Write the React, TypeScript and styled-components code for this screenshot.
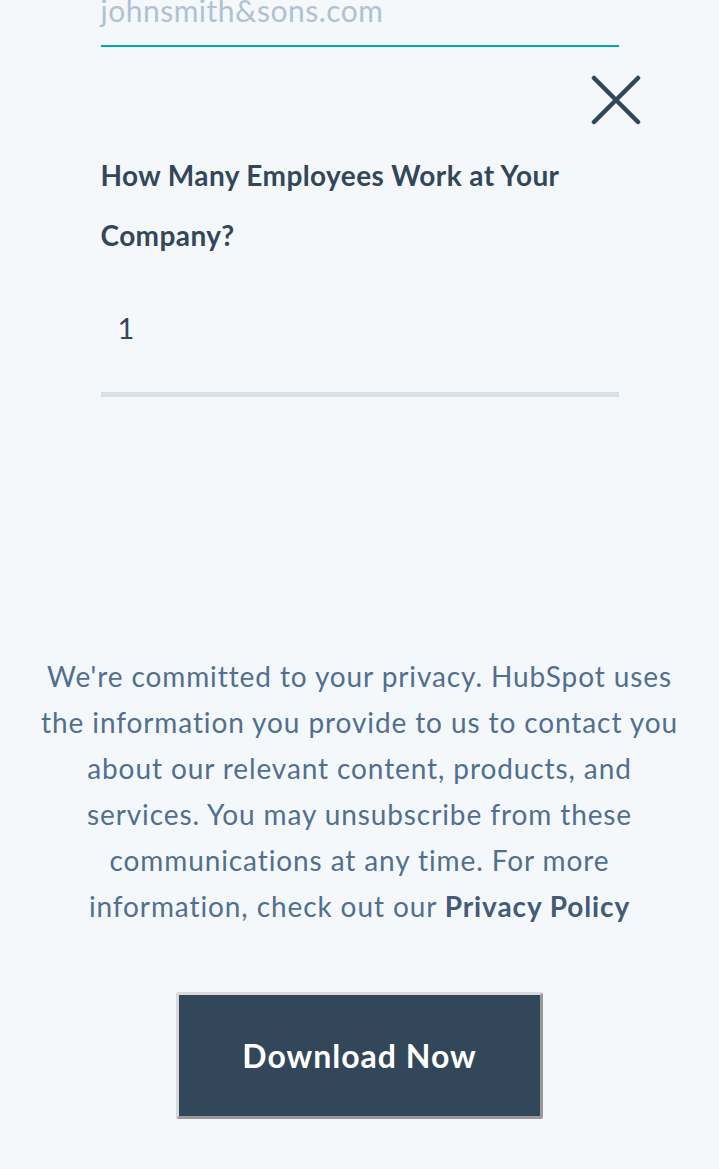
import React from "react";
import styled, { createGlobalStyle } from "styled-components";

const Global = createGlobalStyle`
  html, body {
    margin: 0;
    padding: 0;
    background: #f5f8fa;
  }
  body {
    font-family: Lato, "Noto Sans", "Liberation Sans", sans-serif;
    overflow: hidden;
  }
`;

const Page = styled.div`
  width: 719px;
  min-height: 1169px;
  background: #f5f8fa;
  display: flex;
  flex-direction: column;
  align-items: center;
`;

const Column = styled.div`
  width: 518px;
  display: flex;
  flex-direction: column;
`;

const EmailField = styled.div`
  box-sizing: border-box;
  height: 47px;
  display: flex;
  align-items: flex-end;
  padding-bottom: 20px;
  border-bottom: 2px solid #00a4bd;
`;

const Placeholder = styled.span`
  font-size: 30px;
  line-height: 1;
  color: #b0c1d4;
  letter-spacing: 0.5px;
`;

const CloseRow = styled.div`
  display: flex;
  justify-content: flex-end;
  margin-top: 28px;
  margin-right: -22px;
`;

const CloseButton = styled.button`
  width: 50px;
  height: 50px;
  padding: 0;
  border: 0;
  background: transparent;
  display: flex;
  cursor: pointer;
`;

const Label = styled.label`
  margin-top: 20px;
  font-size: 28px;
  line-height: 60px;
  font-weight: 700;
  letter-spacing: 0.4px;
  color: #33475b;
`;

const NumberField = styled.div`
  box-sizing: border-box;
  height: 132px;
  padding: 48px 0 0 17px;
  border-bottom: 5px solid #d6e0e9;
  font-size: 29px;
  line-height: 30px;
  color: #33475b;
`;

const Privacy = styled.p`
  margin: 256px 0 0;
  width: 719px;
  text-align: center;
  font-size: 28px;
  line-height: 46px;
  letter-spacing: 0.9px;
  color: #516f90;
  white-space: nowrap;
`;

const PolicyLink = styled.a`
  font-weight: 700;
  color: #425b76;
  text-decoration: none;
`;

const SubmitButton = styled.button`
  margin-top: 63px;
  box-sizing: border-box;
  width: 367px;
  height: 127px;
  background: #33475b;
  border: 3px solid;
  border-color: #dadada #9a9a9a #9a9a9a #dadada;
  border-radius: 3px;
  color: #ffffff;
  font-family: inherit;
  font-size: 32px;
  font-weight: 700;
  letter-spacing: 1px;
  cursor: pointer;
`;

function CloseIcon() {
  return (
    <svg width="50" height="50" viewBox="0 0 50 50" fill="none">
      <path
        d="M3 3 L47 47 M47 3 L3 47"
        stroke="#33475b"
        strokeWidth="4.5"
        strokeLinecap="round"
      />
    </svg>
  );
}

export default function App() {
  return (
    <Page>
      <Global />
      <Column>
        <EmailField>
          <Placeholder>johnsmith&amp;sons.com</Placeholder>
        </EmailField>
        <CloseRow>
          <CloseButton aria-label="Close">
            <CloseIcon />
          </CloseButton>
        </CloseRow>
        <Label>
          How Many Employees Work at Your
          <br />
          Company?
        </Label>
        <NumberField>1</NumberField>
      </Column>
      <Privacy>
        We're committed to your privacy. HubSpot uses
        <br />
        the information you provide to us to contact you
        <br />
        about our relevant content, products, and
        <br />
        services. You may unsubscribe from these
        <br />
        communications at any time. For more
        <br />
        information, check out our <PolicyLink href="#">Privacy Policy</PolicyLink>
      </Privacy>
      <SubmitButton>Download Now</SubmitButton>
    </Page>
  );
}
